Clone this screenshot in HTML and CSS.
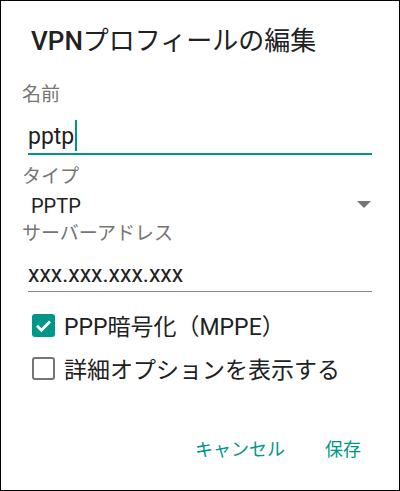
FILE: index.html
```html
<!DOCTYPE html>
<html lang="ja">

<head>
    <meta charset="UTF-8">
    <meta name="viewport" content="width=device-width, initial-scale=1.0">
    <title>VPNプロフィールの編集</title>
    <link rel="stylesheet" href="styles.css">
</head>

<body>
    <div class="dialog">
        <h1 class="title"><span class="title-latin">VPN</span>プロフィールの編集</h1>

        <div class="field">
            <div class="label">名前</div>
            <div class="input focused">pptp<span class="cursor"></span></div>
        </div>

        <div class="field">
            <div class="label type-label">タイプ</div>
            <div class="spinner">
                <span class="spinner-value">PPTP</span>
                <span class="arrow"></span>
            </div>
        </div>

        <div class="field">
            <div class="label server-label">サーバーアドレス</div>
            <div class="input server-input">xxx.xxx.xxx.xxx</div>
        </div>

        <div class="checks">
            <label class="check">
                <span class="box checked">
                    <svg viewBox="0 0 23 23" width="23" height="23">
                        <polyline points="5,11.8 9.4,16.2 18,7.4" fill="none" stroke="#fff" stroke-width="2.8" />
                    </svg>
                </span>
                <span class="check-text">PPP暗号化（MPPE）</span>
            </label>
            <label class="check">
                <span class="box"></span>
                <span class="check-text">詳細オプションを表示する</span>
            </label>
        </div>

        <div class="actions">
            <button class="btn">キャンセル</button>
            <button class="btn">保存</button>
        </div>
    </div>
</body>

</html>
```

FILE: styles.css
```css
* {
    box-sizing: border-box;
    margin: 0;
    padding: 0;
}

body {
    font-family: Roboto, "Noto Sans CJK JP", sans-serif;
    background: #fff;
    color: #212121;
}

.dialog {
    width: 400px;
    height: 491px;
    border: 1px solid #000;
    background: #fff;
    padding-top: 24px;
}

.title {
    font-size: 26px;
    font-weight: 400;
    line-height: 32px;
    padding-left: 30px;
    color: #212121;
}

.title-latin {
    font-weight: 500;
}

.field {
    padding-left: 27px;
    padding-right: 27px;
}

.label {
    font-size: 19px;
    line-height: 24px;
    color: #757575;
    margin-left: -6px;
    margin-top: 26px;
}

.type-label {
    margin-top: 10px;
}

.server-label {
    margin-top: 3px;
}

.input {
    font-size: 23px;
    line-height: 32px;
    margin-top: 14px;
    border-bottom: 2px solid #009688;
    display: flex;
    align-items: center;
}

.server-input {
    margin-top: 13px;
    border-bottom: 1px solid #8a8a8a;
}

.cursor {
    display: inline-block;
    width: 2px;
    height: 31px;
    background: #009688;
    margin-left: 1px;
    margin-top: -4px;
}

.spinner {
    display: flex;
    justify-content: space-between;
    align-items: center;
    font-size: 20px;
    line-height: 26px;
    margin-top: 4px;
    padding-left: 3px;
    padding-right: 1px;
}

.arrow {
    width: 0;
    height: 0;
    border-left: 7px solid transparent;
    border-right: 7px solid transparent;
    border-top: 7px solid #757575;
    margin-top: -4px;
}

.checks {
    margin-top: 17px;
    padding-left: 31px;
    display: flex;
    flex-direction: column;
    gap: 11px;
}

.check {
    display: flex;
    align-items: center;
    height: 32px;
    font-size: 23px;
    color: #212121;
}

.box {
    width: 23px;
    height: 23px;
    border: 2.5px solid #757575;
    border-radius: 3px;
    margin-right: 9px;
    display: flex;
}

.box.checked {
    background: #009688;
    border: none;
}

.actions {
    display: flex;
    justify-content: flex-end;
    gap: 40px;
    margin-top: 54px;
    padding-right: 38px;
}

.btn {
    font-family: Roboto, "Noto Sans CJK JP", sans-serif;
    font-size: 18px;
    line-height: 24px;
    color: #009688;
    background: none;
    border: none;
    cursor: pointer;
}
```
